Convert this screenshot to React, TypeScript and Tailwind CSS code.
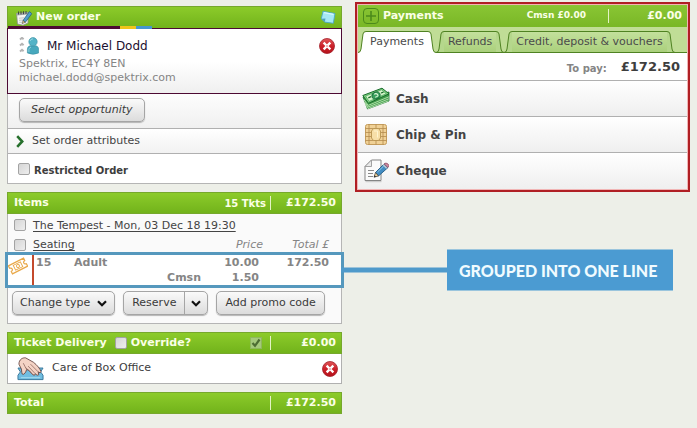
import { FC, ReactNode } from "react";

interface BarProps {
  children: ReactNode;
  amount: string;
}

const Bar: FC<BarProps> = ({ children, amount }) => (
  <div className="flex h-[22px] items-center border border-[#76a82c] bg-linear-to-b from-[#8ccb2a] to-[#72b31b] pr-[5px] pl-1.5 text-[11px] font-bold text-[#fbffe6]">
    {children}
    <span className="w-[65px] text-right">{amount}</span>
  </div>
);

const Divider: FC = () => <span className="h-3.5 w-px bg-[#e3f3c4]" />;

const box =
  "m-0 h-3 w-3 shrink-0 appearance-none rounded-[2px] border border-[#a3a3a3] bg-linear-to-br from-[#d6d6d6] to-[#eeeeee] checked:bg-black";

const button =
  "flex h-6 items-center rounded-[5px] border border-[#a5a5a5] bg-linear-to-b from-[#fafafa] to-[#dcdcdc] text-[11px] text-[#3b3b3b] shadow-[0_1px_1px_#b5b5b5]";

const Chevron: FC = () => (
  <svg width="10" height="7" viewBox="0 0 10 7" fill="none">
    <path d="M1 1.2 5 5.2 9 1.2" stroke="#111" strokeWidth="2.2" />
  </svg>
);

const RemoveButton: FC<{ label: string }> = ({ label }) => (
  <button type="button" aria-label={label} className="h-4 w-4 shrink-0">
    <svg width="16" height="16" viewBox="0 0 16 16">
      <defs>
        <linearGradient id="remove" x1="0" y1="0" x2="0" y2="1">
          <stop offset="0" stopColor="#e0585a" />
          <stop offset="0.5" stopColor="#cc2029" />
          <stop offset="1" stopColor="#b5121b" />
        </linearGradient>
      </defs>
      <circle cx="8" cy="8" r="7.5" fill="url(#remove)" stroke="#a3202a" strokeWidth="0.8" />
      <path
        d="M5.5 5.5 10.5 10.5M10.5 5.5 5.5 10.5"
        stroke="#fff"
        strokeWidth="2.4"
        strokeLinecap="square"
      />
      <circle cx="8" cy="8" r="1" fill="#e9a5a8" />
    </svg>
  </button>
);

const OrderIcon: FC = () => (
  <svg width="16" height="16" viewBox="0 0 16 16">
    <path d="M.6 3.5 12 2.5 12 13 7 15.2 1.5 14Z" fill="#f5f5f3" stroke="#8b8f8b" strokeWidth="0.8" />
    <path d="M.6 3.5 12 2.5V4.5L.8 5.5Z" fill="#a2a8a7" />
    <path d="M2.5 1.5V4.5M5 1.3V4.4M7.5 1.2V4.2M10 1V4" stroke="#3f4646" strokeWidth="1" />
    <path d="M3 8.2 8 7.8M3 10.3 7 10M3.3 12.3H6" stroke="#b9bdbd" strokeWidth="0.9" />
    <path d="M13.5 1.5 15.8 3.7 9.3 12.3 7 10.5Z" fill="#4f9fcd" stroke="#286082" strokeWidth="0.8" />
    <path d="M7 10.5 9.3 12.3 6.1 13.6Z" fill="#f1d18b" stroke="#333" strokeWidth="0.5" />
  </svg>
);

const NoteIcon: FC = () => (
  <svg width="16" height="16" viewBox="0 0 16 16">
    <path d="M3 1.3 15 3.5 13.3 13.3 4.8 12.1 1.3 8.7Z" fill="#a5e8f4" stroke="#4aa6c5" strokeWidth="0.9" />
    <path d="M1.3 8.7 5.5 8.5 4.8 12.1Z" fill="#4d9fbd" />
    <path d="M4 2.7 13.4 4.4" stroke="#d8f8fc" strokeWidth="1.2" />
  </svg>
);

const PersonIcon: FC = () => (
  <svg width="20" height="18" viewBox="0 0 20 18">
    <path
      d="M1 2.5 3 .8 4.6 2.2M1 8.5 3 6.8 4.6 8.2M1 14.5 3 12.8 4.6 14.2"
      fill="none"
      stroke="#b4b4b4"
      strokeWidth="2"
    />
    <path
      d="M8.4 16V12.2C8.4 9.8 10 9 11.2 8.8H16.8C18 9 19.6 9.8 19.6 12.2V16Q14 18.6 8.4 16Z"
      fill="#47a8bd"
      stroke="#3b8ea2"
      strokeWidth="0.6"
    />
    <circle cx="14" cy="4.8" r="4.2" fill="#53b3c7" stroke="#3b8ea2" strokeWidth="0.6" />
    <path d="M11 4Q11.6 2 14 1.8" stroke="#9ad8e4" fill="none" />
    <path d="M9.9 15V12.4Q10.2 10.4 12 10.2" stroke="#8dd0de" fill="none" />
  </svg>
);

const TicketIcon: FC = () => (
  <svg width="20" height="18" viewBox="0 0 20 18" fill="none" stroke="#e9a94a">
    <g transform="rotate(-27 10 9)">
      <path d="M1.5 4.5H18.5V7.2Q16.5 7.5 16.5 9T18.5 10.8V13.5H1.5V10.8Q3.5 10.5 3.5 9T1.5 7.2Z" strokeWidth="1.2" />
      <rect x="6" y="6.3" width="8" height="5.4" strokeWidth="0.9" />
      <circle cx="10" cy="9" r="1.5" strokeWidth="0.9" />
    </g>
  </svg>
);

const HandIcon: FC = () => (
  <svg width="27" height="25" viewBox="0 0 28 25">
    <path d="M1 12H27L24.5 16 27 19.5V24H1V19.5L3.5 16Z" fill="#70bde0" stroke="#38779b" />
    <path d="M4 22H24" stroke="#a7dcef" />
    <path
      d="M2 8C2 3 6 1 9 1.5L17 6C21 9 24 13 25 16Q24.5 18 22 16L22.5 19Q21 20.5 19 18Q18.5 20.5 16.5 19L12.5 14.5 10 13.5Q9.5 16.5 7 18.5 4.7 19 5 16.5L4.5 13Z"
      fill="#f4d3c5"
      stroke="#65443f"
      strokeWidth="0.9"
      strokeLinejoin="round"
    />
    <path
      d="M14 8 22 16M11.5 10 19 18M9 11.5 16.5 19M6.5 7Q8 10 10 13.5"
      stroke="#8d655c"
      strokeWidth="0.8"
      fill="none"
    />
  </svg>
);

const CashIcon: FC = () => (
  <svg width="28" height="24" viewBox="0 0 28 24">
    <path d="M1 10 5.5 22 27 14V5Z" fill="#3f9a49" stroke="#176d2b" strokeWidth="0.8" />
    <path
      d="M1.8 12.5 6.2 18.4 27 9.8M2.4 14.8 6.2 20 27 11.8M3.4 17 6 21.6 26.6 13.8"
      stroke="#c8efbe"
      strokeWidth="0.8"
      fill="none"
    />
    <path d="M.8 8.5 20 1.2 27 6.8 6.5 16.3Z" fill="#83ce82" stroke="#176d2b" strokeWidth="1" strokeLinejoin="round" />
    <path d="M3.6 9 19.6 2.8 24.2 6.7 7 14.4Z" fill="#d8f5cc" stroke="#3fa354" strokeWidth="0.7" />
    <ellipse cx="14" cy="8.5" rx="4.3" ry="3.4" fill="#39a05c" stroke="#126735" strokeWidth="0.8" transform="rotate(-18 14 8.5)" />
    <path d="M12.2 7.4Q14 5.9 15.6 7.5T13.2 10.3" stroke="#e0f6da" fill="none" strokeWidth="1.1" />
    <path d="M6.3 10.8 9 9.7M19 6 21.5 5.1" stroke="#176d2b" strokeWidth="1.3" />
  </svg>
);

const ChipIcon: FC = () => (
  <svg width="22" height="21" viewBox="0 0 22 21">
    <rect x="0.5" y="0.5" width="21" height="20" rx="2" fill="#f0d196" stroke="#c49c5c" />
    <path
      d="M.5 4.5H21.5M.5 8.5H6M16 8.5H21.5M.5 12.5H6M16 12.5H21.5M.5 16.5H21.5M4 .5V20.5M18 .5V20.5M11 .5V4.5M11 16.5V20.5"
      stroke="#b48a4c"
      strokeWidth="0.8"
    />
    <path d="M8.5 4.5H13.5L15.5 7V14L13.5 16.5H8.5L6.5 14V7Z" fill="#f7dfa8" stroke="#b8944f" strokeWidth="0.9" />
    <path d="M9 7H12.5V13.5" stroke="#fff4cf" fill="none" />
  </svg>
);

const ChequeIcon: FC = () => (
  <svg width="25" height="24" viewBox="0 0 25 24">
    <path d="M7.5 1H17V21.5H1V7.5Z" fill="#fbfbfb" stroke="#858585" />
    <path d="M7.5 1V7.5H1Z" fill="#e9e9e9" stroke="#999" strokeWidth="0.9" />
    <path d="M1.5 22.7H17.5" stroke="#c4c4c4" />
    <path d="M4 11.5H10M4 14.5H9M4 17.5H9" stroke="#898989" />
    <path d="M20 5 24 8.5 14.5 17 11.5 13.5Z" fill="#438dc3" stroke="#235a83" strokeWidth="0.9" />
    <path d="M20 4.8Q22 3.2 24 5T24 8.5Z" fill="#d58ca0" stroke="#8d506a" strokeWidth="0.8" />
    <path d="M19 5.5 22.7 9.2" stroke="#bfcbd2" strokeWidth="1.4" />
    <path d="M11.5 13.5 14.5 17 10 18.2Z" fill="#f2d59c" stroke="#333" strokeWidth="0.7" />
    <path d="M10 18.3 10.7 16.2 12 17.7Z" fill="#222" />
    <path d="M19.7 7 13.5 13" stroke="#8fc6e6" />
  </svg>
);

interface TabProps {
  label: string;
  active?: boolean;
}

const Tab: FC<TabProps> = ({ label, active }) => {
  const fill = active ? "#ffffff" : "#b5d78c";
  return (
    <button
      type="button"
      role="tab"
      aria-selected={!!active}
      className="flex h-[22px] text-[11px] whitespace-nowrap text-[#4a4a4a]"
    >
      <svg width="8" height="22" viewBox="0 0 8 22">
        <path d="M0 21.5Q2.6 21.5 3 18L5 3Q5.4 .5 8 .5V22H0Z" fill={fill} />
        <path d="M0 21.5Q2.6 21.5 3 18L5 3Q5.4 .5 8 .5" fill="none" stroke="#4f8222" />
        {!active && <path d="M0 21.5H8" stroke="#4f8222" />}
      </svg>
      <span
        className={`flex h-[22px] items-center border-t border-[#4f8222] px-1 ${
          active ? "bg-white" : "border-b bg-linear-to-b from-[#c3e09c] to-[#aad07c]"
        }`}
      >
        {label}
      </span>
      <svg width="8" height="22" viewBox="0 0 8 22">
        <path d="M8 21.5Q5.4 21.5 5 18L3 3Q2.6 .5 0 .5V22H8Z" fill={fill} />
        <path d="M8 21.5Q5.4 21.5 5 18L3 3Q2.6 .5 0 .5" fill="none" stroke="#4f8222" />
        {!active && <path d="M0 21.5H8" stroke="#4f8222" />}
      </svg>
    </button>
  );
};

const methods = [
  { name: "Cash", icon: <CashIcon /> },
  { name: "Chip & Pin", icon: <ChipIcon /> },
  { name: "Cheque", icon: <ChequeIcon /> },
];

const OrderPanel: FC = () => (
  <section>
    <header className="flex h-[22px] items-center border border-b-0 border-[#76a82c] bg-linear-to-b from-[#8ccb2a] to-[#72b31b] pr-[5px] pl-2 text-[11px] font-bold text-[#fbffe6]">
      <OrderIcon />
      <h2 className="ml-1 flex-1">New order</h2>
      <NoteIcon />
    </header>
    <div className="relative h-[66px] border border-[#4d0a33] bg-linear-to-b from-white from-50% to-[#efefef] px-[11px] pt-2">
      <div className="absolute -top-[3px] left-0 flex h-[3px]">
        <span className="w-28 bg-[#4d0a33]" />
        <span className="w-4 bg-[#f0c419]" />
        <span className="w-4 bg-[#4596cf]" />
      </div>
      <div className="flex h-[18px] items-center">
        <PersonIcon />
        <span className="ml-2 flex-1 text-[12px] leading-4 text-[#1c1030]">Mr Michael Dodd</span>
        <div className="-mr-[5px] flex">
          <RemoveButton label="Remove customer" />
        </div>
      </div>
      <p className="mt-0.5 text-[11px] leading-[14px] text-[#858585]">
        Spektrix, EC4Y 8EN
        <br />
        michael.dodd@spektrix.com
      </p>
    </div>
    <div className="border border-t-0 border-[#b5b5b5] bg-white">
      <div className="border-b border-[#b0b0b0] bg-linear-to-b from-[#fdfdfd] to-[#f0f0f0] px-[11px] pt-1 pb-1.5">
        <button type="button" className={`${button} px-[11px] italic`}>
          Select opportunity
        </button>
      </div>
      <button
        type="button"
        className="flex h-[25px] w-full items-center gap-2 border-b border-[#b0b0b0] bg-linear-to-b from-white to-[#f2f2f2] pl-2 text-[11px] text-[#444]"
      >
        <svg width="8" height="13" viewBox="0 0 8 13" fill="none">
          <path d="M1.2 1.2 6.2 6.5 1.2 11.8" stroke="#27702c" strokeWidth="2.6" />
        </svg>
        Set order attributes
      </button>
      <label className="flex h-[29px] items-center gap-1 pl-2.5 text-[10px] font-bold text-[#3d3d3d]">
        <input type="checkbox" className={box} />
        <span className="pt-1">Restricted Order</span>
      </label>
    </div>
  </section>
);

const ItemsPanel: FC = () => (
  <section>
    <Bar amount="£172.50">
      <h2 className="flex-1">Items</h2>
      <span className="mr-1 text-[10px]">15 Tkts</span>
      <Divider />
    </Bar>
    <div className="border border-t-0 border-[#b5b5b5] bg-[#fafafa] pb-2 text-[11px] text-[#444]">
      <label className="flex h-[21px] items-center gap-[7px] pl-1.5">
        <input type="checkbox" className={box} />
        <span className="pt-1 underline underline-offset-2">The Tempest - Mon, 03 Dec 18 19:30</span>
      </label>
      <div className="flex h-[17px] items-center pt-0.5 pr-3">
        <label className="flex flex-1 items-center gap-[7px] pl-1.5">
          <input type="checkbox" className={box} />
          <span className="pt-0.5 underline underline-offset-2">Seating</span>
        </label>
        <span className="w-20 pt-0.5 text-right text-[#858585] italic">Price</span>
        <span className="w-[66px] pt-0.5 text-right text-[#858585] italic">Total £</span>
      </div>
      <div className="relative -mx-[3px] flex h-9 border-3 border-[#5598bd] bg-white font-bold text-[#858585]">
        <div className="w-6 pt-0.5">
          <TicketIcon />
        </div>
        <div className="w-0.5 bg-[#c44a2c]" />
        <table className="flex-1 text-right leading-[15px]">
          <tbody>
            <tr>
              <td className="w-10 pl-0.5 text-left">15</td>
              <td className="text-left">Adult</td>
              <td className="w-[58px]">10.00</td>
              <td className="w-[82px] pr-3">172.50</td>
            </tr>
            <tr>
              <td />
              <td>Cmsn</td>
              <td>1.50</td>
              <td />
            </tr>
          </tbody>
        </table>
        <div className="absolute top-1/2 left-full flex -translate-y-1/2 items-center">
          <span className="h-[5px] w-[106px] bg-[#4f9acb]" />
          <strong className="bg-[#4b9bd2] py-2.5 pr-4 pl-3 font-[Lato,sans-serif] text-[16px] leading-[21px] font-black whitespace-nowrap text-[#f0fbff]">
            GROUPED INTO ONE LINE
          </strong>
        </div>
      </div>
      <div className="flex gap-2 pt-[3px] pl-1">
        <button type="button" className={`${button} gap-[7px] px-[7px]`}>
          Change type <Chevron />
        </button>
        <div className={button}>
          <button type="button" className="px-2">
            Reserve
          </button>
          <button
            type="button"
            aria-label="Reserve options"
            className="flex h-full items-center border-l border-[#a5a5a5] px-1.5"
          >
            <Chevron />
          </button>
        </div>
        <button type="button" className={`${button} px-2`}>
          Add promo code
        </button>
      </div>
    </div>
  </section>
);

const DeliveryPanel: FC = () => (
  <section>
    <Bar amount="£0.00">
      <h2>Ticket Delivery</h2>
      <label className="ml-2 flex flex-1 items-center gap-1">
        <input type="checkbox" className={box} />
        Override?
      </label>
      <span className="relative mr-2 flex">
        <input
          type="checkbox"
          aria-label="Delivery confirmed"
          defaultChecked
          disabled
          className="m-0 h-3 w-3 appearance-none border border-[#8fb85c] bg-[#a5c97c]"
        />
        <svg className="absolute inset-0" width="12" height="12" viewBox="0 0 12 12" fill="none">
          <path d="M2.5 6 5 8.8 9.5 2.5" stroke="#4d6d33" strokeWidth="2.2" />
        </svg>
      </span>
      <Divider />
    </Bar>
    <div className="flex h-[30px] items-center border border-t-0 border-[#b0b0b0] bg-white pr-[3px] pl-[9px] text-[11px] text-[#3d3d3d]">
      <HandIcon />
      <span className="ml-2 flex-1">Care of Box Office</span>
      <RemoveButton label="Remove delivery" />
    </div>
  </section>
);

const PaymentsPanel: FC = () => (
  <section className="border-2 border-[#b01f24] bg-[#f1b5b5] p-px">
    <header className="flex h-[22px] items-center bg-linear-to-b from-[#8ac634] to-[#79b726] px-[5px] text-[#fbffe6]">
      <svg width="16" height="16" viewBox="0 0 16 16" fill="none" stroke="#4c8a1b">
        <rect x="0.5" y="0.5" width="15" height="15" rx="3.5" />
        <path d="M8 3V13M3 8H13" strokeWidth="1.6" />
      </svg>
      <h2 className="ml-1 flex-1 text-[11px] font-bold">Payments</h2>
      <span className="mr-[22px] text-[9px] font-bold">Cmsn £0.00</span>
      <Divider />
      <span className="w-[73px] text-right text-[11px] font-bold">£0.00</span>
    </header>
    <div role="tablist" className="relative flex h-[26px] items-end bg-[#c0dd96]">
      <div className="absolute inset-x-0 bottom-0 h-px bg-[#4f8222]" />
      <div className="relative flex">
        <Tab label="Payments" active />
        <Tab label="Refunds" />
        <Tab label="Credit, deposit & vouchers" />
      </div>
    </div>
    <div className="flex h-7 items-center justify-end gap-3.5 border-b border-[#b0b0b0] bg-white pr-[7px] font-bold">
      <span className="pt-1 text-[10px] text-[#858585]">To pay:</span>
      <span className="text-[13px] text-[#3d3d3d]">£172.50</span>
    </div>
    {methods.map((method) => (
      <button
        key={method.name}
        type="button"
        className="flex h-9 w-full items-center border-b border-[#b0b0b0] bg-linear-to-b from-white to-[#efefef] pl-1 text-[12px] font-bold text-[#444] last:border-b-0"
      >
        <span className="flex w-7 justify-center">{method.icon}</span>
        <span className="ml-1.5">{method.name}</span>
      </button>
    ))}
  </section>
);

const App: FC = () => {
  return (
    <main className="flex min-h-screen items-start gap-[13px] bg-[#edefe8] px-[7px] pb-3.5 font-['DejaVu_Sans',Verdana,sans-serif]">
      <div className="flex min-w-0 flex-1 flex-col gap-2 pt-1.5">
        <OrderPanel />
        <ItemsPanel />
        <DeliveryPanel />
        <Bar amount="£172.50">
          <h2 className="flex-1">Total</h2>
          <Divider />
        </Bar>
      </div>
      <div className="min-w-0 flex-1 pt-0.5">
        <PaymentsPanel />
      </div>
    </main>
  );
};

export default App;
